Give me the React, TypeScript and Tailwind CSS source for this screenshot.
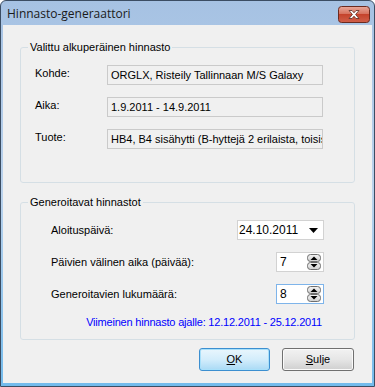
import React from "react";

const font = { fontFamily: '"Liberation Sans", Arial, sans-serif' };

function SpinButtons() {
  return (
    <svg width="14" height="16" viewBox="0 0 14 16" className="shrink-0">
      <defs>
        <linearGradient id="sg" x1="0" y1="0" x2="0" y2="1">
          <stop offset="0" stopColor="#f4f4f4" />
          <stop offset="1" stopColor="#cfcfcf" />
        </linearGradient>
      </defs>
      <rect x="0.5" y="0.5" width="13" height="7" rx="3" fill="url(#sg)" stroke="#6e6e6e" />
      <rect x="0.5" y="8.5" width="13" height="7" rx="3" fill="url(#sg)" stroke="#6e6e6e" />
      <path d="M7 2.5 L10.5 6 L3.5 6 Z" fill="#000" />
      <path d="M3.5 10 L10.5 10 L7 13.5 Z" fill="#000" />
    </svg>
  );
}

function SpinBox({ value, focused }: { value: string; focused?: boolean }) {
  return (
    <div
      className={`flex items-center justify-between w-[48px] h-[20px] bg-white border pl-[3px] pr-[2px] ${
        focused ? "border-[#7eb4ea]" : "border-[#d2d2d2]"
      }`}
    >
      <span className="text-[12px] leading-none text-black">{value}</span>
      <SpinButtons />
    </div>
  );
}

function ReadOnlyField({ text }: { text: string }) {
  return (
    <div className="h-[20px] w-[216px] border border-[#cacaca] bg-[#f0f0f0] pl-[3px] flex items-center overflow-hidden whitespace-nowrap">
      <span className="text-[11px] text-black">{text}</span>
    </div>
  );
}

export default function App() {
  return (
    <div
      style={font}
      className="w-[375px] h-[387px] flex flex-col bg-gradient-to-b from-[#a6c2e3] via-[#bad2ec] to-[#73bbec] border border-[#3b4d63] rounded-t-[6px] overflow-hidden"
    >
      {/* title bar */}
      <div className="h-[24px] flex items-center justify-between pl-[6px] pr-[4px]">
        <span
          className="text-[12px] text-[#1a1a1a] pt-[1px]"
          style={{ fontFamily: '"Open Sans", "Noto Sans", sans-serif' }}
        >
          Hinnasto-generaattori
        </span>
        <svg width="32" height="17" viewBox="0 0 32 17" className="mt-[2px]">
          <defs>
            <linearGradient id="cg" x1="0" y1="0" x2="0" y2="1">
              <stop offset="0" stopColor="#e9a99b" />
              <stop offset="0.45" stopColor="#d7735f" />
              <stop offset="0.5" stopColor="#c5432c" />
              <stop offset="1" stopColor="#d0604a" />
            </linearGradient>
          </defs>
          <rect x="0.5" y="0.5" width="31" height="16" rx="3" fill="url(#cg)" stroke="#6b2a1f" />
          <path
            d="M11 4.5 L14 4.5 L16 6.8 L18 4.5 L21 4.5 L17.6 8.5 L21 12.5 L18 12.5 L16 10.2 L14 12.5 L11 12.5 L14.4 8.5 Z"
            fill="#fff"
            stroke="#5a2a22"
            strokeWidth="0.8"
          />
        </svg>
      </div>

      {/* body */}
      <div className="flex-1 mx-[2px] mb-[3px] bg-[#f0f0f0] flex flex-col pl-[17px] pr-[17px] pt-[15px] text-[11px] text-black">
        <fieldset className="border border-[#d5dfe5] rounded-[3px] px-0 pt-0 pb-0 m-0 min-w-0">
          <legend className="ml-[7px] px-[2px] leading-[14px] text-[11px]">Valittu alkuperäinen hinnasto</legend>
          <div className="pl-[14px] pr-[30px] pt-[11px] pb-[33px] grid grid-cols-[72px_216px] gap-y-[12px] items-center">
            <span className="-mt-[3px]">Kohde:</span>
            <ReadOnlyField text="ORGLX, Risteily Tallinnaan M/S Galaxy" />
            <span className="-mt-[3px]">Aika:</span>
            <ReadOnlyField text="1.9.2011 - 14.9.2011" />
            <span className="-mt-[3px]">Tuote:</span>
            <ReadOnlyField text="HB4, B4 sisähytti (B-hyttejä 2 erilaista, toisissa" />
          </div>
        </fieldset>

        <fieldset className="mt-[12px] border border-[#d5dfe5] rounded-[3px] px-0 pt-0 pb-0 m-0 min-w-0">
          <legend className="ml-[7px] px-[2px] leading-[14px] text-[11px]">Generoitavat hinnastot</legend>
          <div className="pl-[30px] pr-[30px] pt-[11px] pb-[10px]">
            <div className="flex flex-col gap-[12px]">
              <div className="flex items-center justify-between h-[20px]">
                <span>Aloituspäivä:</span>
                <div className="w-[87px] h-[20px] bg-white border border-[#d2d2d2] flex items-center justify-between pl-[1px] pr-[5px]">
                  <span className="text-[12px] leading-none">24.10.2011</span>
                  <svg width="9" height="5" viewBox="0 0 9 5">
                    <path d="M0 0 L9 0 L4.5 5 Z" fill="#000" />
                  </svg>
                </div>
              </div>
              <div className="flex items-center justify-between h-[20px]">
                <span>Päivien välinen aika (päivää):</span>
                <SpinBox value="7" />
              </div>
              <div className="flex items-center justify-between h-[20px]">
                <span>Generoitavien lukumäärä:</span>
                <SpinBox value="8" focused />
              </div>
            </div>
            <div className="mt-[11px] text-right pr-[2px] leading-[14px] tracking-[-0.2px] text-[#0000ff]">
              Viimeinen hinnasto ajalle: 12.12.2011 - 25.12.2011
            </div>
          </div>
        </fieldset>

        <div className="flex justify-end gap-[12px] mt-[8px] pr-[1px]">
          <button className="w-[71px] h-[23px] rounded-[3px] border border-[#3c8fd0] bg-gradient-to-b from-[#e9f6fd] via-[#d3edfb] to-[#a9daf5] shadow-[inset_0_0_0_1px_#a8e0fa] text-[11px]">
            <span className="underline">O</span>K
          </button>
          <button className="w-[72px] h-[23px] rounded-[3px] border border-[#707070] bg-gradient-to-b from-[#f2f2f2] via-[#e6e6e6] to-[#cfcfcf] shadow-[inset_0_0_0_1px_#fafafa] text-[11px]">
            <span className="underline">S</span>ulje
          </button>
        </div>
      </div>
    </div>
  );
}
